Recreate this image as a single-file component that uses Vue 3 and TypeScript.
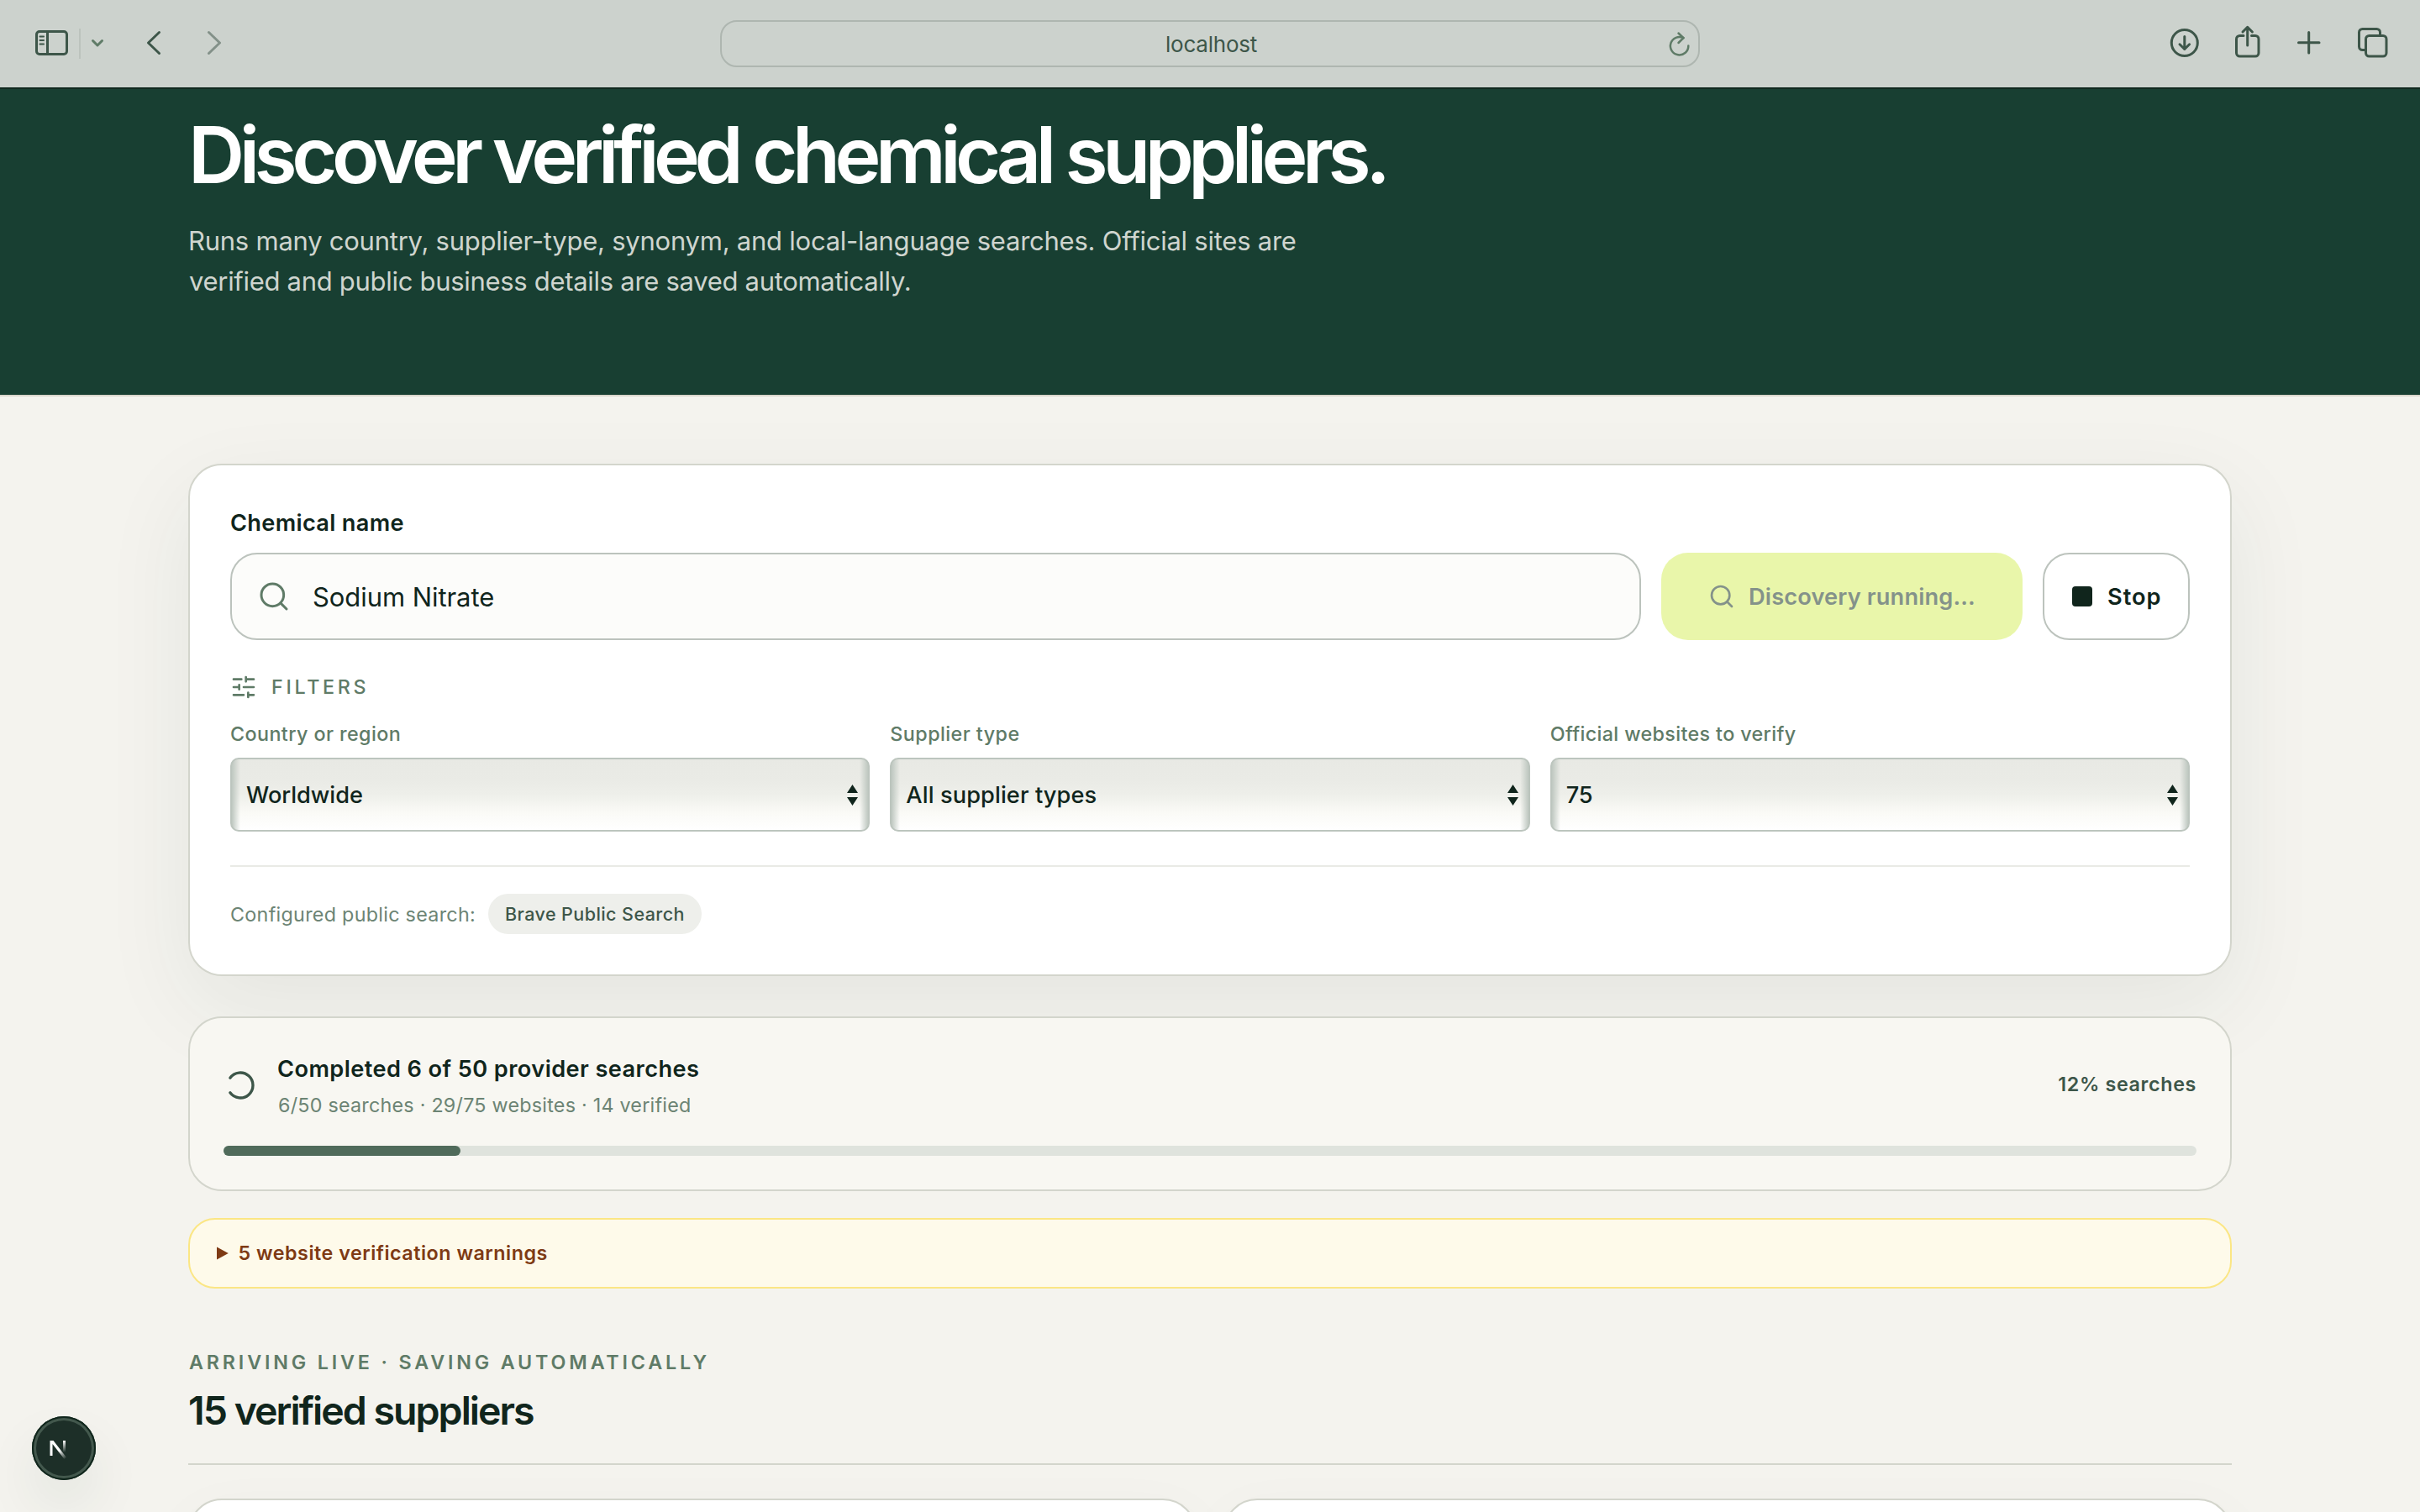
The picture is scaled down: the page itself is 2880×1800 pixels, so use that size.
<script setup lang="ts">
interface Filter {
  label: string
  value: string
  tracking: string
}

const filters: Filter[] = [
  { label: 'Country or region', value: 'Worldwide', tracking: 'country' },
  { label: 'Supplier type', value: 'All supplier types', tracking: 'supplier' },
  { label: 'Official websites to verify', value: '75', tracking: 'websites' },
]
const progress = 12
</script>

<template>
  <div class="screen">
    <header class="toolbar">
      <div class="tools">
        <svg class="i-side" viewBox="40 30 44 44"><rect x="43.500" y="37.500" width="36" height="27" rx="3.500" /><path d="M56.500 37.500v27" /><path class="thin" d="M47.500 43.500h4.500M47.500 48h4.500M47.500 52.500h4.500" /></svg>
        <span class="sep" />
        <svg class="i-drop" viewBox="106 30 20 44"><path d="M110.500 48.500l5.500 5.500l5.500-5.500" /></svg>
        <svg class="i-back" viewBox="172 30 22 44"><path d="M189.500 38.500L176.500 51L189.500 63.500" /></svg>
        <svg class="i-fwd" viewBox="244 30 22 44"><path d="M248.500 38.500L261.500 51L248.500 63.500" /></svg>
      </div>
      <div class="url">
        <span>localhost</span>
        <svg class="i-reload" viewBox="1984 32 30 40"><path d="M2009.300 54.500A10.700 10.700 0 1 1 2003.500 45.200" /><path d="M1997.500 39.500L2003.500 45.200L1997.500 51" /></svg>
      </div>
      <div class="tools end">
        <svg class="i-down" viewBox="2580 30 40 44"><circle cx="2599.800" cy="51" r="15.500" /><path d="M2599.800 43.500V58.500M2594 52.800L2599.800 58.500L2605.600 52.800" /></svg>
        <svg class="i-share" viewBox="2658 30 34 44"><path d="M2670 42.500h-4.500a4 4 0 0 0-4 4v16.500a4 4 0 0 0 4 4h18.500a4 4 0 0 0 4-4v-16.500a4 4 0 0 0-4-4h-4.500" /><path d="M2674.700 54V32.500M2669 38L2674.700 32.300L2680.400 38" /></svg>
        <svg class="i-plus" viewBox="2732 30 32 44"><path d="M2735.500 50.700h24.500M2747.700 38.500v24.500" /></svg>
        <svg class="i-copy" viewBox="2804 30 40 44"><rect x="2815.500" y="42.500" width="24.500" height="24.500" rx="4" /><path d="M2815 59.500h-3.500a4 4 0 0 1-4-4v-17a4 4 0 0 1 4-4h17a4 4 0 0 1 4 4v3.500" /></svg>
      </div>
    </header>

    <section class="hero">
      <h1>Discover verified chemical suppliers.</h1>
      <p>
        <span>Runs many country, supplier-type, synonym, and local-language searches. Official sites are</span><br>
        <span class="second">verified and public business details are saved automatically.</span>
      </p>
    </section>

    <main>
      <section class="card search">
        <div class="name">Chemical name</div>
        <div class="row">
          <div class="input">
            <svg viewBox="0 0 24 24"><circle cx="11" cy="11" r="8" /><path d="m21 21-4.300-4.300" /></svg>
            <span>Sodium Nitrate</span>
          </div>
          <div class="btn lime">
            <svg viewBox="0 0 24 24"><circle cx="11" cy="11" r="8" /><path d="m21 21-4.300-4.300" /></svg>
            <span>Discovery running...</span>
          </div>
          <div class="btn stop"><i /><span>Stop</span></div>
        </div>
        <div class="fhead">
          <svg viewBox="0 0 24 24"><path d="M10 5H3M12 19H3M14 3v4M16 17v4M21 12h-9M21 19h-5M21 5h-7M8 10v4M8 12H3" /></svg>
          <span>FILTERS</span>
        </div>
        <div class="filters">
          <div v-for="f in filters" :key="f.label" class="filter" :class="f.tracking">
            <div class="flabel">{{ f.label }}</div>
            <div class="select">
              <span>{{ f.value }}</span>
              <svg viewBox="0 0 13 25"><path d="M6.500 0L13 10H0zM6.500 25L0 15h13z" /></svg>
            </div>
          </div>
        </div>
        <div class="providers">
          <span>Configured public search:</span>
          <b class="pill">Brave Public Search</b>
        </div>
      </section>

      <section class="card status">
        <div class="srow">
          <svg viewBox="0 0 24 24"><path d="M21 12a9 9 0 1 1-6.219-8.560" /></svg>
          <div class="stext">
            <div class="stitle">Completed 6 of 50 provider searches</div>
            <div class="ssub">6/50 searches · 29/75 websites · 14 verified</div>
          </div>
          <div class="pct">12% searches</div>
        </div>
        <div class="track"><div class="bar" :style="{ width: progress + '%' }" /></div>
      </section>

      <section class="warn">
        <svg viewBox="0 0 14 16"><path d="M0 0.400L13.800 8L0 15.600z" /></svg>
        <span>5 website verification warnings</span>
      </section>

      <div class="live">ARRIVING LIVE · SAVING AUTOMATICALLY</div>
      <h2>15 verified suppliers</h2>
      <div class="results"><div class="card" /><div class="card" /></div>
    </main>

    <div class="badge">
      <svg viewBox="38 1686 76 76">
        <defs>
          <linearGradient id="d" gradientUnits="userSpaceOnUse" x1="70" y1="1727" x2="78" y2="1737"><stop stop-color="#fff" /><stop offset="1" stop-color="#fff" stop-opacity="0" /></linearGradient>
          <linearGradient id="v" gradientUnits="userSpaceOnUse" x1="76" y1="1715" x2="76" y2="1729"><stop stop-color="#fff" /><stop offset="1" stop-color="#fff" stop-opacity="0" /></linearGradient>
        </defs>
        <path d="M59.500 1715h4L79 1735l-2.500 2L62.500 1719V1733h-3z" fill="url(#d)" />
        <path d="M75 1715h3v14h-3z" fill="url(#v)" />
      </svg>
    </div>
  </div>
</template>

<style>
body { background: #f4f3ee; }
</style>

<style scoped>
.screen { position: relative; width: 2880px; height: 1800px; overflow: hidden; background: #f4f3ee; color: #10251c; font-family: Inter, "Liberation Sans", sans-serif; box-sizing: border-box; }
.screen * { box-sizing: border-box; }
svg { display: block; flex: none; fill: none; stroke: currentColor; stroke-linecap: round; stroke-linejoin: round; }
span, .name, .flabel, .pill, .stitle, .ssub, .pct, .live, h2 { white-space: nowrap; }

.toolbar { display: grid; grid-template-columns: 1fr 1166px 1fr; align-items: center; height: 106px; background: #ccd2cd; border-bottom: 2px solid #10291f; color: #3d5649; }
.toolbar svg { height: 44px; stroke-width: 3; }
.tools { display: flex; align-items: center; padding-left: 40px; }
.tools.end { justify-content: flex-end; padding: 0 36px 0 0; }
.i-side { width: 44px; }
.i-side .thin { stroke-width: 2; }
.sep { width: 2px; height: 36px; margin: 0 10px; background: #bcc3bd; }
.i-drop { width: 20px; color: #5f7b67; }
.i-back { width: 22px; margin-left: 46px; }
.i-fwd { width: 22px; margin-left: 50px; color: #839189; }
.i-down { width: 40px; margin-right: 38px; }
.i-share { width: 34px; margin-right: 40px; }
.i-plus { width: 32px; margin-right: 40px; }
.i-copy { width: 40px; }
.url { position: relative; display: flex; align-items: center; justify-content: center; height: 56px; padding: 2px 0 0 3px; border: 2px solid #aeb6b0; border-radius: 20px; font-size: 26px; line-height: 32px; letter-spacing: -0.222px; }
.toolbar .i-reload { position: absolute; right: 7px; top: 6px; width: 30px; height: 40px; color: #5f7b67; stroke-width: 2.5; }

.hero { height: 366px; padding: 30px 224px 0; background: #183f32; border-bottom: 2px solid #d9d6cc; }
h1 { margin: 0; color: #fff; font-size: 93px; font-weight: 600; line-height: 96px; letter-spacing: -6.455px; white-space: nowrap; }
.hero p { margin: 31px 0 0; color: #cfd5cf; font-size: 31px; line-height: 48px; letter-spacing: -0.243px; }
.hero .second { margin-left: 1px; letter-spacing: -0.299px; }

main { padding: 80px 224px 0; }
.card { border: 2px solid #d3d5cc; border-radius: 40px; background: #fff; }
.search { padding: 48px; box-shadow: 0 36px 110px rgba(24, 63, 50, 0.07); }
.name { position: relative; top: 1px; font-size: 27.2px; font-weight: 600; line-height: 40px; letter-spacing: 0.312px; }
.row { display: flex; gap: 24px; height: 104px; margin-top: 16px; }
.input { flex: 1; display: flex; align-items: center; gap: 26px; padding-left: 30px; border: 2px solid #bcc3bd; border-radius: 32px; background: #fcfcfa; font-size: 31px; letter-spacing: -0.069px; }
.input svg { width: 40px; height: 40px; color: #5f7b67; stroke-width: 1.8; }
.btn { display: flex; align-items: center; border-radius: 32px; font-size: 27.2px; font-weight: 600; }
.lime { justify-content: center; gap: 16px; width: 430px; background: #e9f6aa; color: #84928a; letter-spacing: 0.16px; }
.lime svg { width: 32px; height: 32px; stroke-width: 2; }
.stop { width: 175px; padding-left: 33px; border: 2px solid #bcc3bd; gap: 18px; letter-spacing: 0.977px; }
.stop i { width: 24px; height: 24px; border-radius: 4px; background: #10251c; }

.fhead { display: flex; align-items: center; gap: 17px; height: 32px; margin-top: 40px; color: #5f7b67; font-size: 23.3px; font-weight: 500; letter-spacing: 3.7px; }
.fhead span { padding-bottom: 2px; }
.fhead svg { width: 32px; height: 32px; stroke-width: 2; }
.filters { display: grid; grid-template-columns: repeat(3, 1fr); gap: 24px; margin-top: 24px; }
.flabel { color: #5f7b67; font-size: 23.3px; font-weight: 500; line-height: 32px; }
.select { display: flex; align-items: center; justify-content: space-between; height: 88px; margin-top: 12px; padding: 0 12px 0 17px; border: 2px solid #bcc5be; border-radius: 10px; background: linear-gradient(90deg, #bfc8c1, rgba(191, 200, 193, 0) 10px, rgba(191, 200, 193, 0) calc(100% - 10px), #bfc8c1), linear-gradient(#e8e9e4, #eaebe6 30%, #eeefea 50%, #fafaf6 75%, #fff); font-size: 27.2px; font-weight: 500; }
.select svg { width: 13px; height: 25px; fill: #10251c; stroke: none; }
.country .flabel { letter-spacing: 0.418px; }
.country .select { letter-spacing: -0.014px; }
.supplier .flabel { letter-spacing: 0.448px; }
.supplier .select { letter-spacing: 0.101px; }
.websites .flabel { letter-spacing: 0.37px; }
.websites .select { letter-spacing: -0.266px; }
.providers { display: flex; align-items: center; gap: 15px; margin-top: 40px; padding-top: 32px; border-top: 2px solid #e9eae5; color: #6c8474; font-size: 23.3px; letter-spacing: 0.293px; }
.pill { display: flex; align-items: center; height: 48px; padding: 0 20px; border-radius: 24px; background: #eeefeb; color: #3d5649; font-size: 21.5px; font-weight: 500; letter-spacing: 0.43px; }

.status { margin-top: 48px; padding: 40px; background: #f8f7f2; }
.srow { display: flex; align-items: center; }
.srow svg { width: 40px; height: 40px; color: #3d5649; transform: rotate(216deg); stroke-width: 2; }
.stext { flex: 1; margin-left: 24px; }
.stitle { position: relative; top: 1px; font-size: 27.2px; font-weight: 600; line-height: 40px; letter-spacing: 0.407px; }
.ssub { margin-top: 8px; padding-left: 1px; color: #6c8474; font-size: 23.3px; line-height: 32px; letter-spacing: 0.238px; }
.pct { padding-bottom: 3px; color: #3d5649; font-size: 23.3px; font-weight: 600; letter-spacing: 0.649px; }
.track { height: 12px; margin-top: 32px; border-radius: 6px; background: #dfe3dd; }
.bar { height: 12px; border-radius: 6px; background: #506b5b; }

.warn { display: flex; align-items: center; height: 84px; margin-top: 32px; padding-left: 32px; border: 2px solid #fbe684; border-radius: 32px; background: #fefaea; color: #7e3a14; font-size: 23.3px; font-weight: 600; letter-spacing: 0.507px; }
.warn svg { width: 14px; height: 16px; margin-right: 11.5px; fill: #7e3a14; stroke: none; }
.warn span { padding-bottom: 2px; }

.live { margin-top: 72px; padding-left: 1px; color: #5f7b67; font-size: 23.3px; font-weight: 600; line-height: 32px; letter-spacing: 3.835px; }
h2 { margin: 9px 0 0; padding-bottom: 31px; border-bottom: 2px solid #d3d5cc; font-size: 46.5px; font-weight: 600; line-height: 64px; letter-spacing: -1.986px; }
.results { display: grid; grid-template-columns: 1fr 1fr; gap: 32px; margin-top: 40px; }
.results .card { height: 400px; box-shadow: 0 20px 70px rgba(24, 63, 50, 0.04); }

.badge { position: absolute; left: 38px; top: 1686px; width: 76px; height: 76px; border-radius: 50%; background: #1d2f28; box-shadow: inset 0 0 0 2px #10261c, inset 0 0 0 5px #43584d, 0 32px 64px rgba(24, 63, 50, 0.08); }
.badge svg { width: 76px; height: 76px; stroke: none; }
</style>
